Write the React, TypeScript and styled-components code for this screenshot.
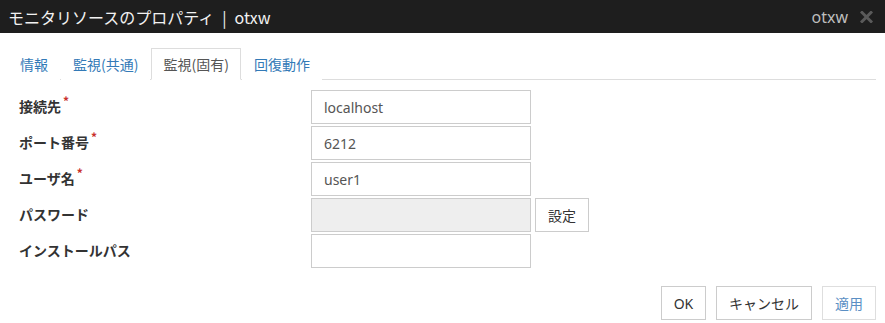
import React from "react";
import styled, { createGlobalStyle } from "styled-components";

const GlobalStyle = createGlobalStyle`
  html, body { margin: 0; padding: 0; background: #fff; }
  body {
    font-family: "Noto Sans", "Noto Sans CJK JP", sans-serif;
    font-size: 14px;
    color: #333;
  }
  * { box-sizing: border-box; }
`;

const Dialog = styled.div`
  width: 885px;
  height: 323px;
  display: flex;
  flex-direction: column;
  background: #fff;
`;

const TitleBar = styled.div`
  height: 33px;
  background: #1e1e1e;
  display: flex;
  align-items: center;
  padding: 0 12px 0 8px;
`;

const Title = styled.div`
  flex: 1;
  color: #f2f2f2;
  font-size: 16px;
  font-family: "Noto Sans CJK JP", "Noto Sans", sans-serif;
  line-height: 1;
  white-space: pre;
`;

const TitleRight = styled.div`
  color: #bdbdbd;
  font-size: 16px;
  margin-right: 12px;
  line-height: 1;
`;

const CloseIcon = styled.svg`
  width: 13px;
  height: 12px;
  display: block;
`;

const Body = styled.div`
  flex: 1;
  display: flex;
  flex-direction: column;
  padding: 15px 9px 0 8px;
`;

const TabList = styled.div`
  display: flex;
  height: 32px;
  border-bottom: 1px solid #dddddd;
`;

const Tab = styled.div<{ $active?: boolean }>`
  height: 32px;
  padding: 0 11px;
  margin-right: 1px;
  display: flex;
  align-items: center;
  font-size: 14px;
  font-family: "Noto Sans CJK JP", "Noto Sans", sans-serif;
  color: ${(p) => (p.$active ? "#555" : "#337ab7")};
  background: #fff;
  border: 1px solid ${(p) => (p.$active ? "#dddddd" : "transparent")};
  border-bottom-color: ${(p) => (p.$active ? "#fff" : "transparent")};
  margin-bottom: -1px;
  padding-bottom: 1px;
`;

const Form = styled.div`
  display: flex;
  flex-direction: column;
  gap: 2px;
  margin-top: 10px;
`;

const Row = styled.div`
  display: flex;
  align-items: center;
  height: 34px;
`;

const Label = styled.div`
  width: 303px;
  padding-left: 11px;
  font-weight: bold;
  font-size: 14px;
  font-family: "Noto Sans CJK JP", "Noto Sans", sans-serif;
  color: #333;
  margin-top: -2px;
`;

const Required = styled.span`
  color: #c9302c;
  font-size: 12px;
  vertical-align: top;
  position: relative;
  top: -4px;
  margin-left: 2px;
`;

const Input = styled.div<{ $disabled?: boolean }>`
  width: 220px;
  height: 34px;
  border: 1px solid #cccccc;
  background: ${(p) => (p.$disabled ? "#eeeeee" : "#fff")};
  padding: 0 12px;
  display: flex;
  align-items: center;
  color: #555;
  font-size: 14px;
`;

const Button = styled.div<{ $disabled?: boolean; $w?: number }>`
  height: 34px;
  width: ${(p) => p.$w ?? 54}px;
  border: 1px solid ${(p) => (p.$disabled ? "#dedede" : "#cccccc")};
  background: #fff;
  display: flex;
  align-items: center;
  justify-content: center;
  font-size: 14px;
  font-family: "Noto Sans", "Noto Sans CJK JP", sans-serif;
  color: ${(p) => (p.$disabled ? "#5b8fc4" : "#333")};
`;

const SideButton = styled(Button)`
  margin-left: 4px;
`;

const Footer = styled.div`
  display: flex;
  justify-content: flex-end;
  gap: 10px;
  margin-top: 18px;
`;

const fields: { label: string; value: string; required?: boolean; disabled?: boolean; button?: string }[] = [
  { label: "接続先", value: "localhost", required: true },
  { label: "ポート番号", value: "6212", required: true },
  { label: "ユーザ名", value: "user1", required: true },
  { label: "パスワード", value: "", disabled: true, button: "設定" },
  { label: "インストールパス", value: "" },
];

export default function App() {
  return (
    <>
      <GlobalStyle />
      <Dialog>
        <TitleBar>
          <Title>{"モニタリソースのプロパティ\u2002|\u2002otxw"}</Title>
          <TitleRight>otxw</TitleRight>
          <CloseIcon viewBox="0 0 13 12">
            <path d="M2 1.5 L11 10.5 M11 1.5 L2 10.5" stroke="#5a5a5a" strokeWidth="3" strokeLinecap="square" />
          </CloseIcon>
        </TitleBar>
        <Body>
          <TabList>
            <Tab>情報</Tab>
            <Tab>監視(共通)</Tab>
            <Tab $active>監視(固有)</Tab>
            <Tab>回復動作</Tab>
          </TabList>
          <Form>
            {fields.map((f) => (
              <Row key={f.label}>
                <Label>
                  {f.label}
                  {f.required && <Required>*</Required>}
                </Label>
                <Input $disabled={f.disabled}>{f.value}</Input>
                {f.button && <SideButton>{f.button}</SideButton>}
              </Row>
            ))}
          </Form>
          <Footer>
            <Button $w={45}>OK</Button>
            <Button $w={96}>キャンセル</Button>
            <Button $w={54} $disabled>適用</Button>
          </Footer>
        </Body>
      </Dialog>
    </>
  );
}
